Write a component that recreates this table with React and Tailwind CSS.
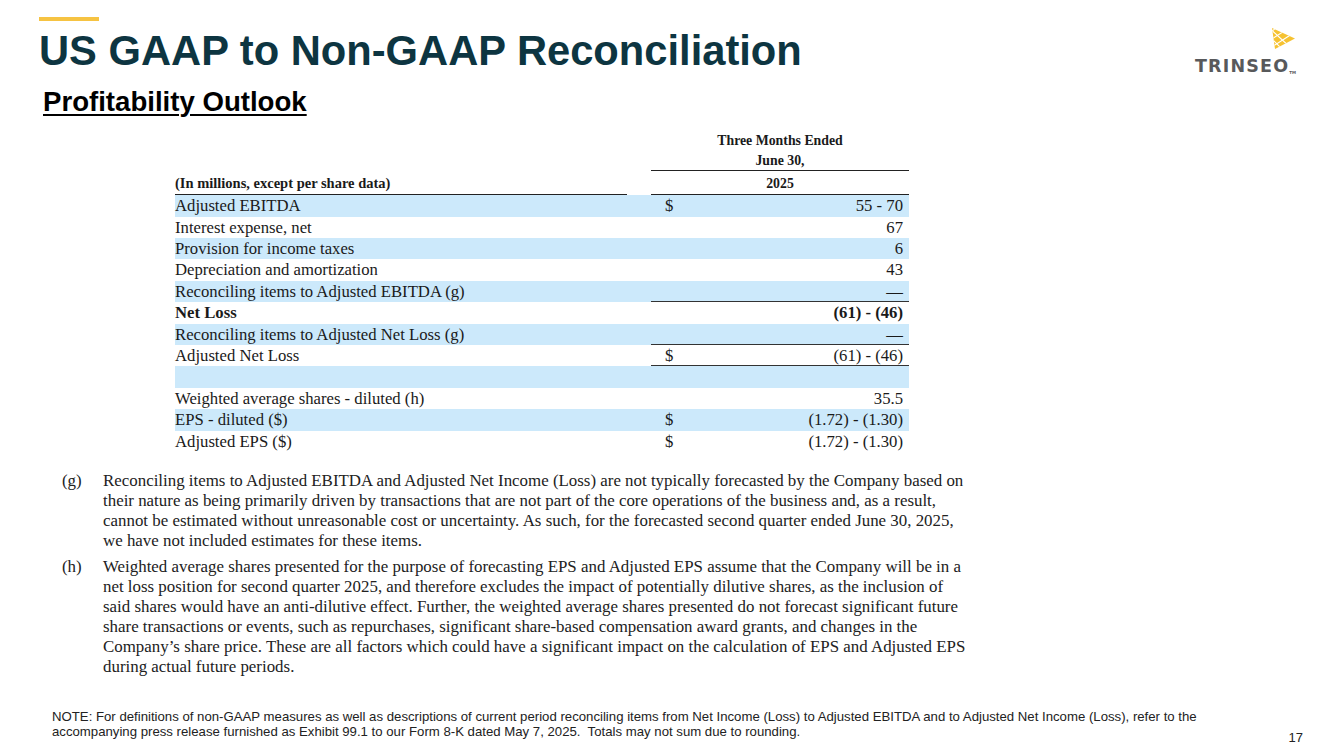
import clsx from 'clsx';

const rows = [
  { label: 'Adjusted EBITDA', cur: '$', val: '55 - 70', blue: true },
  { label: 'Interest expense, net', val: '67' },
  { label: 'Provision for income taxes', val: '6', blue: true },
  { label: 'Depreciation and amortization', val: '43' },
  { label: 'Reconciling items to Adjusted EBITDA (g)', val: '—', blue: true, line: true },
  { label: 'Net Loss', val: '(61) - (46)', bold: true },
  { label: 'Reconciling items to Adjusted Net Loss (g)', val: '—', blue: true, line: true },
  { label: 'Adjusted Net Loss', cur: '$', val: '(61) - (46)', line: true },
  { label: '', val: '', blue: true },
  { label: 'Weighted average shares - diluted (h)', val: '35.5' },
  { label: 'EPS - diluted ($)', cur: '$', val: '(1.72) - (1.30)', blue: true },
  { label: 'Adjusted EPS ($)', cur: '$', val: '(1.72) - (1.30)' },
];

const noteG = [
  'Reconciling items to Adjusted EBITDA and Adjusted Net Income (Loss) are not typically forecasted by the Company based on',
  'their nature as being primarily driven by transactions that are not part of the core operations of the business and, as a result,',
  'cannot be estimated without unreasonable cost or uncertainty. As such, for the forecasted second quarter ended June 30, 2025,',
  'we have not included estimates for these items.',
];

const noteH = [
  'Weighted average shares presented for the purpose of forecasting EPS and Adjusted EPS assume that the Company will be in a',
  'net loss position for second quarter 2025, and therefore excludes the impact of potentially dilutive shares, as the inclusion of',
  'said shares would have an anti-dilutive effect. Further, the weighted average shares presented do not forecast significant future',
  'share transactions or events, such as repurchases, significant share-based compensation award grants, and changes in the',
  'Company’s share price. These are all factors which could have a significant impact on the calculation of EPS and Adjusted EPS',
  'during actual future periods.',
];

function Logo() {
  return (
    <div className="flex flex-col items-end pr-[37px]">
      <svg width="25" height="21" viewBox="0 0 25 21" className="mt-[11px]">
        <defs>
          <clipPath id="tri">
            <polygon points="1,0 24,10.5 4,21" />
          </clipPath>
        </defs>
        <polygon points="1,0 24,10.5 4,21" fill="#f6c231" />
        <g clipPath="url(#tri)" stroke="#fff" strokeWidth="1.1">
          <line x1="-4" y1="6" x2="12" y2="-4" />
          <line x1="-4" y1="14" x2="18" y2="0" />
          <line x1="-4" y1="22" x2="24" y2="4" />
          <line x1="2" y1="26" x2="30" y2="8" />
          <line x1="-4" y1="-2" x2="20" y2="20" />
          <line x1="-4" y1="6" x2="14" y2="24" />
          <line x1="-4" y1="14" x2="8" y2="26" />
        </g>
      </svg>
      <div className="mt-[9px] flex items-end font-['DejaVu_Sans',sans-serif] text-[17.5px] leading-none font-bold tracking-[1.2px] text-[#58595b]">
        TRINSEO<span className="text-[4px] tracking-normal mb-[1px]">TM</span>
      </div>
    </div>
  );
}

export default function App() {
  return (
    <div className="w-[1333px] h-[749px] bg-white overflow-hidden flex flex-col font-['Liberation_Sans',Arial,sans-serif] text-[#1a1a1a]">
      <div className="flex justify-between pt-[17px]">
        <div className="pl-[39px]">
          <div className="w-[60px] h-[4px] bg-[#f6c342]" />
          <h1 className="mt-[9px] text-[41.7px] leading-none font-bold text-[#0d3541]">
            US GAAP to Non-GAAP Reconciliation
          </h1>
          <h2 className="mt-[16px] ml-[4px] text-[27.6px] leading-none font-bold underline decoration-[2px] underline-offset-[3px] text-black">
            Profitability Outlook
          </h2>
        </div>
        <Logo />
      </div>

      <div className="mt-[15px] ml-[175px] w-[734px] font-['Liberation_Serif','Times_New_Roman',serif]">
        <div className="flex h-[21px] text-[13.8px] leading-[21px] font-bold">
          <div className="w-[476px]" />
          <div className="w-[258px] text-center">Three Months Ended</div>
        </div>
        <div className="flex h-[20px] text-[13.8px] leading-[19px] font-bold">
          <div className="w-[476px]" />
          <div className="w-[258px] text-center border-b border-[#222]">June 30,</div>
        </div>
        <div className="flex h-[24px] leading-[21px] font-bold">
          <div className="w-[452px] pt-[2px] text-[14.5px] border-b border-[#222]">(In millions, except per share data)</div>
          <div className="w-[24px]" />
          <div className="w-[258px] pt-[2px] text-[13.8px] text-center border-b border-[#222]">2025</div>
        </div>
        {rows.map((r, i) => (
          <div
            key={i}
            className={clsx(
              'flex h-[21.4px] text-[16.7px] leading-[21.4px]',
              r.blue ? 'bg-[#cce9fb]' : 'bg-white',
              r.bold && 'font-bold'
            )}
          >
            <div className="w-[476px] whitespace-nowrap">{r.label}</div>
            <div
              className={clsx(
                'w-[258px] flex justify-between pl-[14px] pr-[6px]',
                r.line && 'border-b-[1.5px] border-[#333]'
              )}
            >
              <span>{r.cur}</span>
              <span>{r.val}</span>
            </div>
          </div>
        ))}
      </div>

      <div className="mt-[19px] ml-[62px] font-['Liberation_Serif','Times_New_Roman',serif] text-[16.9px] leading-[20px] text-[#222]">
        <div className="flex">
          <div className="w-[41px]">(g)</div>
          <div>
            {noteG.map((l) => (
              <div key={l} className="whitespace-nowrap">{l}</div>
            ))}
          </div>
        </div>
        <div className="flex mt-[6px]">
          <div className="w-[41px]">(h)</div>
          <div>
            {noteH.map((l) => (
              <div key={l} className="whitespace-nowrap">{l}</div>
            ))}
          </div>
        </div>
      </div>

      <div className="mt-auto mb-[4px] flex items-start justify-between pl-[52px] pr-[30px] text-[13.2px] leading-[15px] text-[#222]">
        <div>
          <div className="whitespace-nowrap">
            NOTE: For definitions of non-GAAP measures as well as descriptions of current period reconciling items from Net Income (Loss) to Adjusted EBITDA and to Adjusted Net Income (Loss), refer to the
          </div>
          <div className="whitespace-nowrap">
            accompanying press release furnished as Exhibit 99.1 to our Form 8-K dated May 7, 2025.&nbsp; Totals may not sum due to rounding.
          </div>
        </div>
        <div className="mt-[21px] text-[13px] leading-[15px]">17</div>
      </div>
    </div>
  );
}
